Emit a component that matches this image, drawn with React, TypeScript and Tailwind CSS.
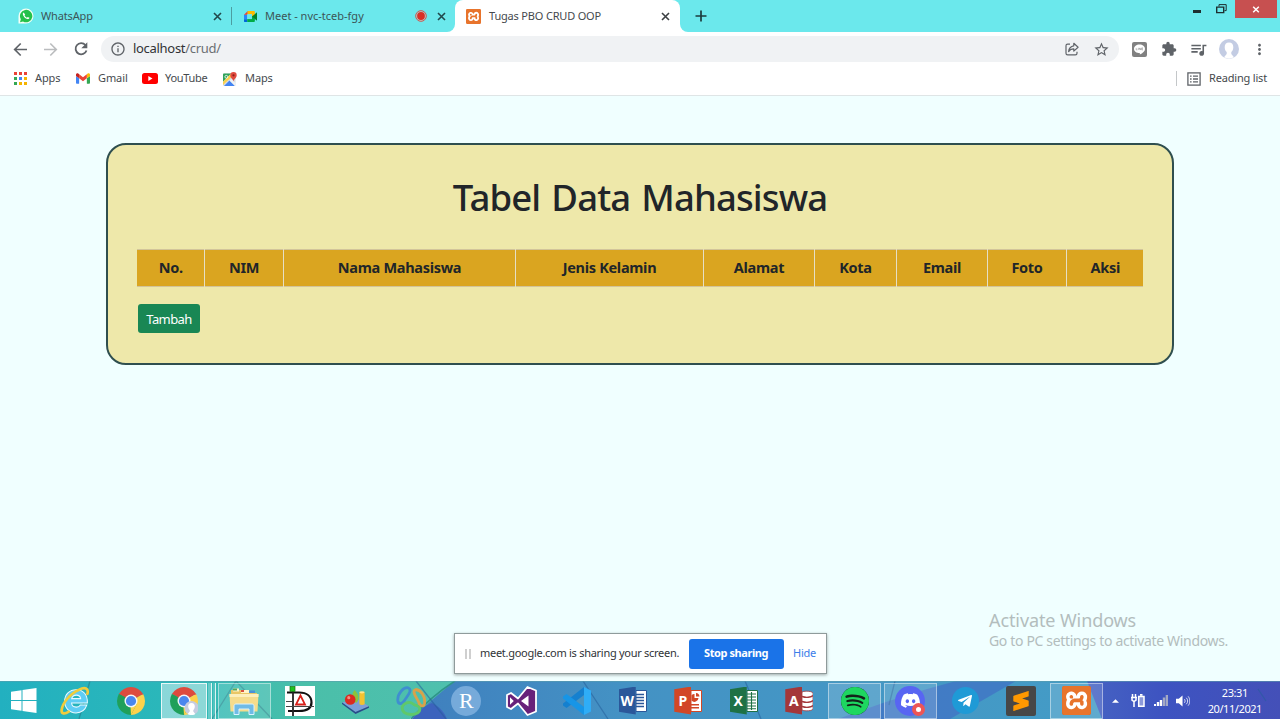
import type { ReactNode } from "react";
import {
  SiDiscord,
  SiSpotify,
  SiSublimetext,
  SiXampp,
} from "react-icons/si";
import { FaTelegramPlane } from "react-icons/fa";
import {
  MdExtension,
  MdMoreVert,
  MdOutlineInfo,
  MdQueueMusic,
  MdStarBorder,
} from "react-icons/md";

function XamppIcon({ className }: { className: string }) {
  return (
    <span className={`flex rounded-[2px] bg-[#dd6a28] ${className}`}>
      <span className="flex h-full w-full rounded-[5px] bg-white bg-clip-content p-[2px]">
        <SiXampp className="-m-[2px] h-[calc(100%+4px)] w-[calc(100%+4px)] shrink-0 text-[#e8742c]" />
      </span>
    </span>
  );
}

function WhatsAppIcon() {
  return (
    <svg viewBox="0 0 16 16" className="h-4 w-4">
      <path d="M.5 15.5V8a7.5 7.5 0 1 1 7.5 7.5z" fill="#f3fff6" />
      <path d="M2 14.2l.8-3A6.2 6.2 0 1 1 5 13.4z" fill="#25c14b" />
      <path
        d="M5.6 4.6c-.9.5-1 1.500-.5 2.600.9 1.900 2.200 3.200 4.200 3.900 1.100.3 2-.2 2.200-1.300l-1.800-.9-.8.8C7.800 9.200 7 8.400 6.500 7.300l.7-.8z"
        fill="#fff"
      />
    </svg>
  );
}

function MeetIcon() {
  return (
    <svg viewBox="0 0 16 14" className="h-[13px] w-[15px]">
      <path d="M1 5h3.500v5H1z" fill="#2684fc" />
      <path d="M1 5L5 1v4z" fill="#ea4335" />
      <path d="M5 1h6.500c.8 0 1.200.5 1.200 1.200V6L9.500 8V4.500H5z" fill="#ffba00" />
      <path d="M1 10h3.500v3H2c-.6 0-1-.4-1-1z" fill="#0066da" />
      <path d="M4.500 9.800h5V7.500l3.200-2v6.300c0 .8-.5 1.200-1.200 1.200h-7z" fill="#00ac47" />
      <path d="M9.500 7L15 2.500v9z" fill="#00832d" />
      <path d="M4.500 4.500h5v5.300h-5z" fill="#6be8ec" />
    </svg>
  );
}

function GmailIcon() {
  return (
    <svg viewBox="0 0 16 12" className="h-[11px] w-[14px]">
      <path d="M1.100 12h2.500V5.800L0 3.100v7.800C0 11.500.5 12 1.100 12z" fill="#4285f4" />
      <path d="M12.400 12h2.500c.6 0 1.100-.5 1.100-1.100V3.100l-3.600 2.700z" fill="#34a853" />
      <path d="M12.400 1.200v4.600L16 3.100V1.700c0-1.400-1.600-2.100-2.600-1.300z" fill="#fbbc04" />
      <path d="M3.600 5.800V1.200L8 4.500l4.400-3.300v4.600L8 9.100z" fill="#ea4335" />
      <path d="M0 1.700v1.400l3.600 2.700V1.200L2.600.4C1.600-.4 0 .3 0 1.700z" fill="#c5221f" />
    </svg>
  );
}

function YouTubeIcon() {
  return (
    <svg viewBox="0 0 16 11" className="h-[11px] w-[16px]">
      <rect width="16" height="11" rx="2.500" fill="#f00" />
      <path d="M6.300 3v5l4.200-2.500z" fill="#fff" />
    </svg>
  );
}

function MapsIcon() {
  return (
    <svg viewBox="0 0 14 14" className="h-[14px] w-[14px]">
      <rect y="1.500" width="12.500" height="12.500" rx="1.200" fill="#d5dbe0" />
      <path d="M0 2.700C0 2 .5 1.500 1.200 1.500h7L0 9.700z" fill="#2fa35a" />
      <path d="M0 9.700L8.200 1.500l1.700 2.200L0 13z" fill="#fbd04b" />
      <path d="M1 14l5.500-5.500L12 14z" fill="#4384f3" />
      <path d="M6.500 8.500L8.500 7l4 4v3H12z" fill="#eef1f4" />
      <circle cx="3.300" cy="4.800" r="1.400" fill="none" stroke="#fff" strokeWidth=".8" />
      <path d="M10.500 9.500C10 7 7.300 6 7.300 3.300a3.200 3.200 0 0 1 6.400 0C13.700 6 11 7 10.500 9.500z" fill="#e04a3f" />
      <circle cx="10.500" cy="3.300" r="1.100" fill="#8d1f18" />
    </svg>
  );
}

const appDots = [
  "#ea4335", "#ea4335", "#ea4335",
  "#34a853", "#4285f4", "#f5b400",
  "#34a853", "#f5b400", "#f5b400",
];

function AppsIcon() {
  return (
    <svg viewBox="0 0 13 13" className="h-[13px] w-[13px]">
      {appDots.map((fill, i) => (
        <rect key={i} x={(i % 3) * 5} y={Math.floor(i / 3) * 5} width="3" height="3" fill={fill} />
      ))}
    </svg>
  );
}

function Bookmark({ icon, label, className }: { icon: ReactNode; label: string; className: string }) {
  return (
    <div className={`flex items-center ${className}`}>
      {icon}
      <span>{label}</span>
    </div>
  );
}

function TabClose({ className }: { className: string }) {
  return (
    <svg viewBox="0 0 13 13" className={`h-[13px] w-[13px] ${className}`} fill="none" stroke="currentColor" strokeWidth="1.600">
      <path d="M3 3l7 7M10 3l-7 7" />
    </svg>
  );
}

function TabStrip() {
  return (
    <div className="flex h-8 shrink-0 bg-[#6be8ec] text-[11px] text-[#3c5557]">
      <div className="flex w-[231px] items-center pl-[18px] pr-[7px]">
        <WhatsAppIcon />
        <span className="ml-[7px] tracking-[-0.15px]">WhatsApp</span>
        <TabClose className="ml-auto text-[#21484b]" />
      </div>
      <div className="my-auto h-[18px] w-px bg-[#4c9da1]" />
      <div className="flex w-[223px] bg-white">
        <div className="flex w-full items-center rounded-br-lg bg-[#6be8ec] pl-[11px] pr-[7px]">
          <MeetIcon />
          <span className="ml-[7px]">Meet - nvc-tceb-fgy</span>
          <svg viewBox="0 0 12 12" className="ml-auto h-3 w-3">
            <circle cx="6" cy="6" r="5.300" fill="#b8d0cf" stroke="#c8574f" strokeWidth="1" />
            <circle cx="6" cy="6" r="3.900" fill="#d93025" />
          </svg>
          <TabClose className="ml-[8px] text-[#21484b]" />
        </div>
      </div>
      <div className="flex w-[225px] bg-[#6be8ec]">
        <div className="flex w-full items-center rounded-t-lg bg-white pl-[11px] pr-[8px] text-[#45494d]">
          <XamppIcon className="h-[15px] w-[15px]" />
          <span className="ml-[8px] tracking-[-0.18px]">Tugas PBO CRUD OOP</span>
          <TabClose className="ml-auto text-[#3c4043]" />
        </div>
      </div>
      <div className="flex flex-1 bg-white">
        <div className="flex flex-1 items-start rounded-bl-lg bg-[#6be8ec] pl-[13px]">
          <svg viewBox="0 0 16 16" className="mt-[8px] h-4 w-4" stroke="#1d3b3d" strokeWidth="1.700">
            <path d="M8 2.500v11M2.500 8h11" />
          </svg>
          <div className="ml-auto flex">
            <div className="mt-[10px] h-[2.500px] w-[8px] bg-[#1d2f30]" />
            <svg viewBox="0 0 11 10" className="ml-[15px] mt-[4px] h-[10px] w-[11px]" fill="none" stroke="#1d2f30">
              <path d="M3 2.500V.6h7.200v6H8.500" />
              <path d="M.7 3.100h7v5.500h-7z" strokeWidth="1.400" />
            </svg>
            <div className="ml-[8px] mr-[3px] flex h-[18px] w-[42px] items-center justify-center bg-[#c75050]">
              <svg viewBox="0 0 8 8" className="h-[7px] w-[8px]" stroke="#fff" strokeWidth="1.700">
                <path d="M.8.800l6.400 6.400M7.200.8L.8 7.200" />
              </svg>
            </div>
          </div>
        </div>
      </div>
    </div>
  );
}

function Toolbar() {
  return (
    <div className="flex h-[34px] shrink-0 items-center bg-white text-[#5f6368]">
      <svg viewBox="0 0 17 17" className="ml-[12px] h-[17px] w-[17px]" fill="none" stroke="currentColor" strokeWidth="1.700">
        <path d="M15 8.500H3M8.700 2.500l-6 6 6 6" />
      </svg>
      <svg viewBox="0 0 17 17" className="ml-[13px] h-[17px] w-[17px] text-[#babcbe]" fill="none" stroke="currentColor" strokeWidth="1.600">
        <path d="M2 8.500h12M8.300 2.500l6 6-6 6" />
      </svg>
      <svg viewBox="0 0 18 18" className="ml-[13px] h-[18px] w-[18px]" fill="none" stroke="currentColor" strokeWidth="1.800">
        <path d="M13.400 5A5.600 5.600 0 1 0 14.500 10.500" />
        <path d="M15.300 2.200v6H9.300z" fill="currentColor" stroke="none" />
      </svg>
      <div className="ml-[11px] flex h-[26px] w-[1018px] items-center rounded-full bg-[#f0f2f4] pl-[9px] pr-[8px]">
        <MdOutlineInfo className="h-[16px] w-[16px]" />
        <span className="ml-[7px] text-[13px] tracking-[-0.3px] text-[#303336]">
          localhost<span className="text-[#6b6f73]">/crud/</span>
        </span>
        <svg viewBox="0 0 14 14" className="ml-auto h-[14px] w-[14px]" fill="none" stroke="currentColor" strokeWidth="1.200" strokeLinejoin="round">
          <path d="M5 2.200H2.600C1.700 2.200 1 2.900 1 3.800v7.400c0 .9.7 1.600 1.600 1.600h7.800c.9 0 1.600-.7 1.600-1.600V9.800" />
          <path d="M8.800 1.300l4.300 3.900-4.300 3.900V6.900c-2.400 0-4 .8-5.200 2.700.3-3 2-5.300 5.200-5.800z" />
        </svg>
        <MdStarBorder className="ml-[14px] mr-px h-[17px] w-[17px]" />
      </div>
      <svg viewBox="0 0 15 15" className="ml-[13px] h-[15px] w-[15px]">
        <rect width="15" height="15" rx="2" fill="#818181" />
        <path d="M7.500 2.600c3.100 0 5.500 1.900 5.500 4.300 0 2.300-2.300 4.100-5.200 5.700v-1.500C4.500 11 2 9.300 2 6.900c0-2.400 2.400-4.300 5.500-4.300z" fill="#fff" />
        <path d="M4.200 5.900v2h1.200M6.300 5.900v2M7.300 7.900v-2l1.400 2v-2M11 5.900H9.700v2H11M9.700 6.900H11" fill="none" stroke="#818181" strokeWidth=".5" />
      </svg>
      <MdExtension className="ml-[14px] h-[16px] w-[16px]" />
      <MdQueueMusic className="ml-[12px] h-[19px] w-[19px]" />
      <svg viewBox="0 0 20 20" className="ml-[11px] h-5 w-5">
        <circle cx="10" cy="10" r="10" fill="#c3cce3" />
        <path d="M10 3.500c3 0 4.300 2 4.300 4.700 0 2.200-.9 4-2 4.900v2l2.700 3.200A10 10 0 0 1 5 18.300l2.700-3.200v-2c-1.100-.9-2-2.700-2-4.900 0-2.700 1.300-4.700 4.300-4.700z" fill="#fff" />
      </svg>
      <MdMoreVert className="ml-[12px] h-[17px] w-[17px]" />
    </div>
  );
}

function BookmarkBar() {
  return (
    <div className="flex h-[30px] shrink-0 items-center border-b border-[#dfe5e6] bg-white pb-[4px] text-[11px] tracking-[-0.1px] text-[#45494d]">
      <Bookmark className="w-[62px] gap-[8px]" icon={<span className="pl-[14px]"><AppsIcon /></span>} label="Apps" />
      <Bookmark className="ml-[14px] w-[52px] gap-[8px]" icon={<GmailIcon />} label="Gmail" />
      <Bookmark className="ml-[14px] w-[66px] gap-[7px] tracking-[-0.3px]" icon={<YouTubeIcon />} label="YouTube" />
      <Bookmark className="ml-[15px] gap-[8px]" icon={<MapsIcon />} label="Maps" />
      <div className="ml-auto h-[15px] w-px bg-[#c4c7c9]" />
      <svg viewBox="0 0 14 14" className="ml-[10px] h-[14px] w-[14px]" fill="none" stroke="#5f6368" strokeWidth="1.300">
        <rect x=".9" y=".9" width="12.200" height="12.200" />
        <path d="M3 4.200h1.600M3 7h1.600M3 9.800h1.600M6 4.200h5M6 7h5M6 9.800h5" />
      </svg>
      <span className="ml-[8px] mr-[13px] tracking-[-0.18px]">Reading list</span>
    </div>
  );
}

const columns = [
  { label: "No.", width: "w-[67px]" },
  { label: "NIM", width: "w-[79px]" },
  { label: "Nama Mahasiswa", width: "w-[232px]" },
  { label: "Jenis Kelamin", width: "w-[188px]" },
  { label: "Alamat", width: "w-[111px]" },
  { label: "Kota", width: "w-[82px]" },
  { label: "Email", width: "w-[91px]" },
  { label: "Foto", width: "w-[79px]" },
  { label: "Aksi", width: "w-[77px]" },
];

function StudentPage() {
  return (
    <main className="flex flex-1 flex-col bg-[#f0ffff] px-[106px] pt-[47px]">
      <section className="h-[222px] rounded-[20px] border-2 border-[#2f4f4f] bg-[#eee8aa] px-[29px] pt-[30px] text-[#212529]">
        <h1 className="text-center text-[36.500px] font-medium leading-[45px] tracking-[-0.88px] [word-spacing:2.500px]">Tabel Data Mahasiswa</h1>
        <table className="mt-[29px] w-[1006px] table-fixed border-collapse border-b border-t border-[#d2c49a] bg-[#daa520]">
          <thead>
            <tr>
              {columns.map((c) => (
                <th key={c.label} className={`${c.width} h-[37px] border-l border-[#e6dfc4] pl-px text-center text-[14.500px] font-bold tracking-[-0.3px] first:border-l-0`}>
                  {c.label}
                </th>
              ))}
            </tr>
          </thead>
        </table>
        <button className="ml-px mt-[17px] block h-[29px] w-[62px] rounded-[3px] bg-[#198754] pt-[2px] text-[13px] tracking-[-0.6px] text-white">
          Tambah
        </button>
      </section>
      <div className="ml-auto mr-[-54px] mt-auto w-[239px] whitespace-nowrap pb-[30px] text-[#b3bdbd]">
        <div className="text-[18px] leading-[22px] tracking-[-0.1px]">Activate Windows</div>
        <div className="text-[14px] leading-[20px] tracking-[-0.34px]">Go to PC settings to activate Windows.</div>
      </div>
    </main>
  );
}

function SharingBar() {
  return (
    <div className="absolute left-[454px] top-[633px] flex h-[41px] w-[373px] items-center border border-[#8f9b9b] bg-white text-[11px] shadow-[0_1px_3px_rgba(0,0,0,0.35)]">
      <div className="ml-[10px] h-[10px] w-[6px] border-x-2 border-[#cfcfcf]" />
      <span className="ml-[9px] whitespace-nowrap tracking-[-0.28px] text-[#303336]">meet.google.com is sharing your screen.</span>
      <button className="ml-auto h-[30px] w-[95px] rounded-[3px] bg-[#1a73e8] pr-px font-bold tracking-[-0.42px] text-white">Stop sharing</button>
      <span className="ml-[9px] mr-[10px] tracking-[-0.25px] text-[#3b7de9]">Hide</span>
    </div>
  );
}

function WindowsLogo() {
  return (
    <svg viewBox="0 0 26 25" className="h-[25px] w-[26px]" fill="#fff">
      <path d="M0 3.700l10.500-1.500v9.800H0zM11.500 2L25.500 0v12h-14zM0 13h10.500v9.800L0 21.300zM11.500 13h14v12l-14-2z" />
    </svg>
  );
}

function IeIcon() {
  return (
    <svg viewBox="0 0 30 30" className="h-[31px] w-[31px]">
      <path
        d="M26.500 17.500H11.200c.2 2.500 2 3.900 4.600 3.900 1.900 0 3.200-.8 3.900-2.100h6.300C24.500 24 20.600 27 15.500 27 9 27 4.500 22.300 4.500 15.800S9.200 4.500 15.700 4.500c7 0 11.100 5 10.800 13zM20 13.200c-.3-2.100-1.800-3.400-4.200-3.400s-4 1.300-4.500 3.400z"
        fill="#5fcdf5"
        stroke="#eafaff"
        strokeWidth="1"
      />
      <path
        d="M26.500 8.500c1.500-5.500-2.500-6.800-8-4C9.500 8.500 2.500 17.500 1.600 24c-.5 4.200 2.900 4.300 6.900 1.800"
        fill="none"
        stroke="#f0cc3c"
        strokeWidth="2.600"
        strokeLinecap="round"
      />
    </svg>
  );
}

function ChromeIcon({ avatar = false }: { avatar?: boolean }) {
  return (
    <svg viewBox="0 0 28 28" className="h-[28px] w-[28px]">
      <path d="M14 14L1.880 7A14 14 0 0 1 26.120 7z" fill="#dd4b3e" />
      <path d="M14 14L26.120 7A14 14 0 0 1 14 28z" fill="#fdd24c" />
      <path d="M14 14V28A14 14 0 0 1 1.880 7z" fill="#1fa05a" />
      <path d="M14 7.500h12.400l-.3-.5H14z" fill="#dd4b3e" />
      <path d="M8.400 17.200L1.880 7l6 3zM19.600 17.200L14 28l1-8z" fill="#1fa05a" />
      <path d="M19.800 17.200L14 28l-.5-7.500z" fill="#fdd24c" />
      <circle cx="14" cy="14" r="6.500" fill="#f4f8f8" />
      <circle cx="14" cy="14" r="5.100" fill="#4a87ee" />
      {avatar && (
        <g>
          <circle cx="21.500" cy="21" r="7" fill="#c5cce0" />
          <path d="M21.500 16c2.300 0 3.300 1.500 3.300 3.500 0 1.600-.7 2.800-1.500 3.500v1.500l2 2.400a7 7 0 0 1-7.600 0l2-2.400V23c-.8-.7-1.500-1.900-1.500-3.500 0-2 1-3.500 3.300-3.500z" fill="#fff" />
        </g>
      )}
    </svg>
  );
}

function ExplorerIcon() {
  return (
    <svg viewBox="0 0 32 28" className="h-[28px] w-[32px]">
      <path d="M3 3h10l2 3h14v17H3z" fill="#e9c766" />
      <path d="M5 1.500h6v3H5zM13 3h8v3h-8z" fill="#fff4c7" />
      <path d="M5 1.500h4v2H5z" fill="#58a65c" />
      <path d="M13 3h3v2h-3z" fill="#d84f3f" />
      <path d="M21 3.500h6v2.500h-6z" fill="#4a91d8" />
      <path d="M1.500 7h29l-1 17.500H2.500z" fill="#f5dc8c" />
      <path d="M1.500 7h29v3h-29z" fill="#fcefbd" />
      <path d="M6 27.500V19c0-1.200.8-2 2-2h16c1.200 0 2 .8 2 2v8.500h-5V22H11v5.500z" fill="#6fbbe6" stroke="#d9f3ff" strokeWidth="1" />
    </svg>
  );
}

function DiaIcon() {
  return (
    <svg viewBox="0 0 30 30" className="h-[30px] w-[30px]">
      <rect width="30" height="30" fill="#fff" />
      <path d="M2 6.500h12C22 6.500 26.500 10.500 26.500 16.500S21 25 14 25H3" fill="none" stroke="#111" strokeWidth="2.200" />
      <path d="M8 4v26" stroke="#222" strokeWidth="1.800" />
      <path d="M15.500 9.500L11 18.500h9z" fill="none" stroke="#d9201a" strokeWidth="1.800" />
      <path d="M1 15.500h6M1 20.500h28" stroke="#444" strokeWidth="1.200" />
      <rect x="5" y=".5" width="5" height="5" fill="#1fc21f" stroke="#156e15" strokeWidth=".7" />
    </svg>
  );
}

function ShapesIcon() {
  return (
    <svg viewBox="0 0 30 27" className="h-[26px] w-[29px]">
      <path d="M1 15l15-4 13 8-14 6z" fill="#7d9ed8" />
      <path d="M1 15l14 10 14-6v1.500L15 27 1 16.500z" fill="#2b4a8c" />
      <path d="M14 2c4 4 5.500 8 2.500 13h-4C10.500 10 11.500 5 14 2z" fill="#8bc43c" />
      <path d="M19 4.500h5.500V17c-1.500 1-4 1-5.500 0z" fill="#f2c230" />
      <ellipse cx="21.700" cy="4.500" rx="2.800" ry="1.200" fill="#ffe58a" />
      <circle cx="9.500" cy="12" r="5.500" fill="#dc2a20" />
      <circle cx="8" cy="10" r="1.600" fill="#f58d80" />
    </svg>
  );
}

function LoopsIcon() {
  return (
    <svg viewBox="0 0 30 30" className="h-[30px] w-[30px]" fill="none" strokeWidth="2.800">
      <path d="M12 1.800C7.500 1 1.200 8 1.800 14.500c.5 4.300 4.500 3.800 6.500.2C10.500 11 17.500 4 12 1.800z" stroke="#3f8ed0" />
      <path d="M20 3.500c5 .5 9.500 7 8.500 14-.6 3.500-4.500 3-5.500-.5C22 13 14.500 5 20 3.500z" stroke="#d8a24a" />
      <path d="M6.500 20.500c-1.500 5 3 8 8.500 8s10-2.500 8.500-6.500c-1-3-4-1.500-7-4.500-2-2-8-1.500-10 3z" stroke="#5fc86a" />
    </svg>
  );
}

function VisualStudioIcon() {
  return (
    <svg viewBox="0 0 31 30" className="h-[30px] w-[31px]">
      <path d="M1 9l4-2 7 5.500L21.500 1 30 4.500v21L21.500 29 12 17.500 5 23l-4-2z" fill="#68217a" stroke="#fff" strokeWidth="1.800" strokeLinejoin="round" />
      <path d="M4 11.300v7.400L7.800 15zM22.500 9.500v11L15 15z" fill="#fff" />
    </svg>
  );
}

function VsCodeIcon() {
  return (
    <svg viewBox="0 0 30 30" className="h-[30px] w-[30px]">
      <path d="M22 9v12l-8-6z" fill="#4a93bf" />
      <path d="M22 1v8L4.500 22 1 19.500v-2z" fill="#1580cf" />
      <path d="M22 29v-8L4.500 8 1 10.500v2z" fill="#1795e6" />
      <path d="M22 1l7 3.500v21L22 29z" fill="#2fadf7" />
    </svg>
  );
}

function OfficeIcon({ letter, color, children }: { letter: string; color: string; children: ReactNode }) {
  return (
    <div className="flex items-center">
      <div className={`flex h-[28px] w-[17px] items-center justify-center text-[14px] font-bold text-white [clip-path:polygon(0_10%,100%_0,100%_100%,0_90%)] ${color}`}>
        {letter}
      </div>
      <svg viewBox="0 0 11 22" className="h-[22px] w-[11px]">
        {children}
      </svg>
    </div>
  );
}

function WordIcon() {
  return (
    <OfficeIcon letter="W" color="bg-[#2b579a]">
      <path d="M0 .5h10.500v21H0z" fill="#fff" stroke="#2b579a" />
      <path d="M0 4.500h8M0 7.500h8M0 10.500h8M0 13.500h8M0 16.500h8" stroke="#2b579a" strokeWidth="1.300" />
    </OfficeIcon>
  );
}

function PowerPointIcon() {
  return (
    <OfficeIcon letter="P" color="bg-[#d24726]">
      <path d="M0 .5h10.500v21H0z" fill="#fff" stroke="#d24726" />
      <path d="M3.500 4v4h4a4 4 0 0 1-7 2.500V5.300A4 4 0 0 1 3.500 4zM5 3a4 4 0 0 1 3.500 3.500H5zM0 14h8v1.500H0zM0 17h8v1.500H0z" fill="#d24726" />
    </OfficeIcon>
  );
}

function ExcelIcon() {
  return (
    <OfficeIcon letter="X" color="bg-[#1e7145]">
      <path d="M0 .5h10.500v21H0z" fill="#fff" stroke="#1e7145" />
      <path d="M0 4h9M0 7h9M0 10h9M0 13h9M0 16h9M0 18.800h9M4.500 2v18" stroke="#1e7145" strokeWidth="1.100" />
    </OfficeIcon>
  );
}

function AccessIcon() {
  return (
    <OfficeIcon letter="A" color="bg-[#a4373a]">
      <path d="M0 2c3-1.500 11-1 11 1.500v15C11 21 3 21.500 0 20z" fill="#fff" stroke="#a4373a" strokeWidth=".8" />
      <path d="M0 6.500c4 1.500 9 1 11-1M0 11.500c4 1.500 9 1 11-1M0 16.500c4 1.500 9 1 11-1" fill="none" stroke="#a4373a" strokeWidth="1.400" />
    </OfficeIcon>
  );
}

function TaskSlot({ open = false, children }: { open?: boolean; children: ReactNode }) {
  return (
    <div className="flex w-[55.500px] shrink-0 items-center justify-center">
      <div className={open ? "flex h-[36px] w-[53px] items-center justify-center border border-white/45 bg-white/15" : "flex h-[36px] w-[53px] items-center justify-center"}>
        {children}
      </div>
    </div>
  );
}

function Wallpaper() {
  return (
    <svg viewBox="0 0 1280 38" preserveAspectRatio="none" className="absolute inset-0 h-full w-full">
      <defs>
        <linearGradient id="teal">
          <stop offset="0" stopColor="#22b0c0" />
          <stop offset=".4" stopColor="#2cb8b9" />
          <stop offset=".65" stopColor="#4abfa9" />
          <stop offset="1" stopColor="#4fc0ae" />
        </linearGradient>
        <linearGradient id="blue">
          <stop offset="0" stopColor="#3f7fbe" />
          <stop offset=".3" stopColor="#4492c4" />
          <stop offset="1" stopColor="#449cc6" />
        </linearGradient>
        <linearGradient id="indigo">
          <stop offset="0" stopColor="#4663c2" />
          <stop offset=".4" stopColor="#3d53c1" />
          <stop offset="1" stopColor="#4450b8" />
        </linearGradient>
      </defs>
      <path d="M0 0h460L410 38H0z" fill="url(#teal)" />
      <path d="M455 0h655v38H412C425 24 440 12 455 0z" fill="url(#blue)" />
      <path d="M1087 0h193v38h-178z" fill="url(#indigo)" />
      <path d="M411 38c14-16 28-28 44-38" fill="none" stroke="#2f9489" strokeWidth="1.500" />
      <path d="M412 38c6-8 12-13 20-16 8 4 12 9 15 16z" fill="#3c63bd" />
      <path d="M838 38c40-15 80-28 118-38h60L950 38z" fill="#4065c4" opacity=".55" />
      <path d="M90 0L79 38M236 0l-24 38M236 0l36 38" fill="none" stroke="#226f80" strokeOpacity=".5" strokeWidth="1.300" />
      <path d="M416 0l30 38M583 0l25 38M745 0l16 38M895 0l-6 24M1258 8l8 12" fill="none" stroke="#245f9a" strokeOpacity=".55" strokeWidth="1.300" />
      <path d="M0 .5h1280" stroke="#5c9dab" strokeOpacity=".55" />
    </svg>
  );
}

function Taskbar() {
  return (
    <footer className="relative h-[38px] shrink-0 overflow-hidden">
      <Wallpaper />
      <div className="relative flex h-full pt-px">
        <div className="flex w-[47px] shrink-0 items-center justify-center"><WindowsLogo /></div>
        <div className="flex w-[56px] shrink-0 items-center justify-center"><IeIcon /></div>
        <div className="flex w-[56px] shrink-0 items-center justify-center"><ChromeIcon /></div>
        <div className="flex w-[57.500px] shrink-0 items-center gap-px pl-[1.500px]">
          <div className="flex h-[36px] w-[46px] items-center justify-center border border-white/80 bg-white/45"><ChromeIcon avatar /></div>
          <div className="h-[36px] w-[4px] border-r border-white/80 bg-white/25" />
          <div className="h-[36px] w-[3px] border-r border-white/80 bg-white/15" />
        </div>
        <TaskSlot open><ExplorerIcon /></TaskSlot>
        <TaskSlot><DiaIcon /></TaskSlot>
        <TaskSlot><ShapesIcon /></TaskSlot>
        <TaskSlot><LoopsIcon /></TaskSlot>
        <TaskSlot>
          <div className="flex h-[30px] w-[30px] items-center justify-center rounded-full bg-[#76aada] font-['Liberation_Serif'] text-[22px] text-white">R</div>
        </TaskSlot>
        <TaskSlot><VisualStudioIcon /></TaskSlot>
        <TaskSlot><VsCodeIcon /></TaskSlot>
        <TaskSlot><WordIcon /></TaskSlot>
        <TaskSlot><PowerPointIcon /></TaskSlot>
        <TaskSlot><ExcelIcon /></TaskSlot>
        <TaskSlot><AccessIcon /></TaskSlot>
        <TaskSlot open>
          <span className="flex rounded-full bg-[#14231b]"><SiSpotify className="h-[28px] w-[28px] text-[#1ed760]" /></span>
        </TaskSlot>
        <TaskSlot open>
          <div className="relative flex h-[30px] w-[30px] items-center justify-center rounded-full bg-[#5865f2]">
            <SiDiscord className="h-[19px] w-[19px] text-white" />
            <span className="absolute bottom-0 right-0 h-[13px] w-[13px] rounded-full border-4 border-[#ed5555] bg-white" />
          </div>
        </TaskSlot>
        <TaskSlot>
          <div className="flex h-[27px] w-[27px] items-center justify-center rounded-full bg-[#1f9ad6]">
            <FaTelegramPlane className="mr-[2px] h-[16px] w-[16px] text-white" />
          </div>
        </TaskSlot>
        <TaskSlot>
          <div className="flex h-[30px] w-[30px] items-center justify-center rounded-[2px] bg-[#474747]">
            <SiSublimetext className="h-[20px] w-[20px] text-[#ff9800]" />
          </div>
        </TaskSlot>
        <TaskSlot open><XamppIcon className="h-[29px] w-[29px]" /></TaskSlot>
        <div className="flex items-center text-white">
          <svg viewBox="0 0 8 4" className="ml-[7px] h-[4px] w-[7px]" fill="#fff"><path d="M0 4l4-4 4 4z" /></svg>
          <svg viewBox="0 0 14 13" className="ml-[12px] h-[13px] w-[14px]" fill="none" stroke="#fff" strokeWidth="1.500">
            <path d="M1.500 0v3M4.500 0v3M0 3.500h6M1 3.500v2.500l2 1.500 2-1.500V3.500M3 7v6" />
            <path d="M7.700 2.500h5.300v9.700H7.700z" fill="#8c99da" />
            <path d="M9 .9h2.500" strokeWidth="1.800" />
          </svg>
          <svg viewBox="0 0 14 11" className="ml-[9px] h-[11px] w-[14px]" fill="#fff">
            <path d="M0 9h2v2H0zM2.800 7h2.400v4H2.800zM5.800 5h2.400v6H5.800z" />
            <path d="M8.800 2.500h2.400V11H8.800zM11.700 0H14v11h-2.300z" fill="#a3a9c4" />
          </svg>
          <svg viewBox="0 0 15 12" className="ml-[8px] h-[12px] w-[14px]" fill="none" stroke="#fff">
            <path d="M0 3.500h3L7 0v12L3 8.500H0z" fill="#fff" stroke="none" />
            <path d="M9 4c1 1 1 3 0 4M11 2.500c2 2 2 5 0 7M13 1c2.400 3 2.400 7 0 10" strokeOpacity=".85" />
          </svg>
        </div>
        <div className="ml-auto mr-[18px] flex flex-col items-center justify-center text-[11px] leading-[16px] tracking-[-0.42px] text-white">
          <span>23:31</span>
          <span>20/11/2021</span>
        </div>
      </div>
    </footer>
  );
}

export default function App() {
  return (
    <div className="relative flex h-[719px] w-[1280px] flex-col overflow-hidden font-['Noto_Sans',sans-serif]">
      <TabStrip />
      <Toolbar />
      <BookmarkBar />
      <StudentPage />
      <Taskbar />
      <SharingBar />
    </div>
  );
}
